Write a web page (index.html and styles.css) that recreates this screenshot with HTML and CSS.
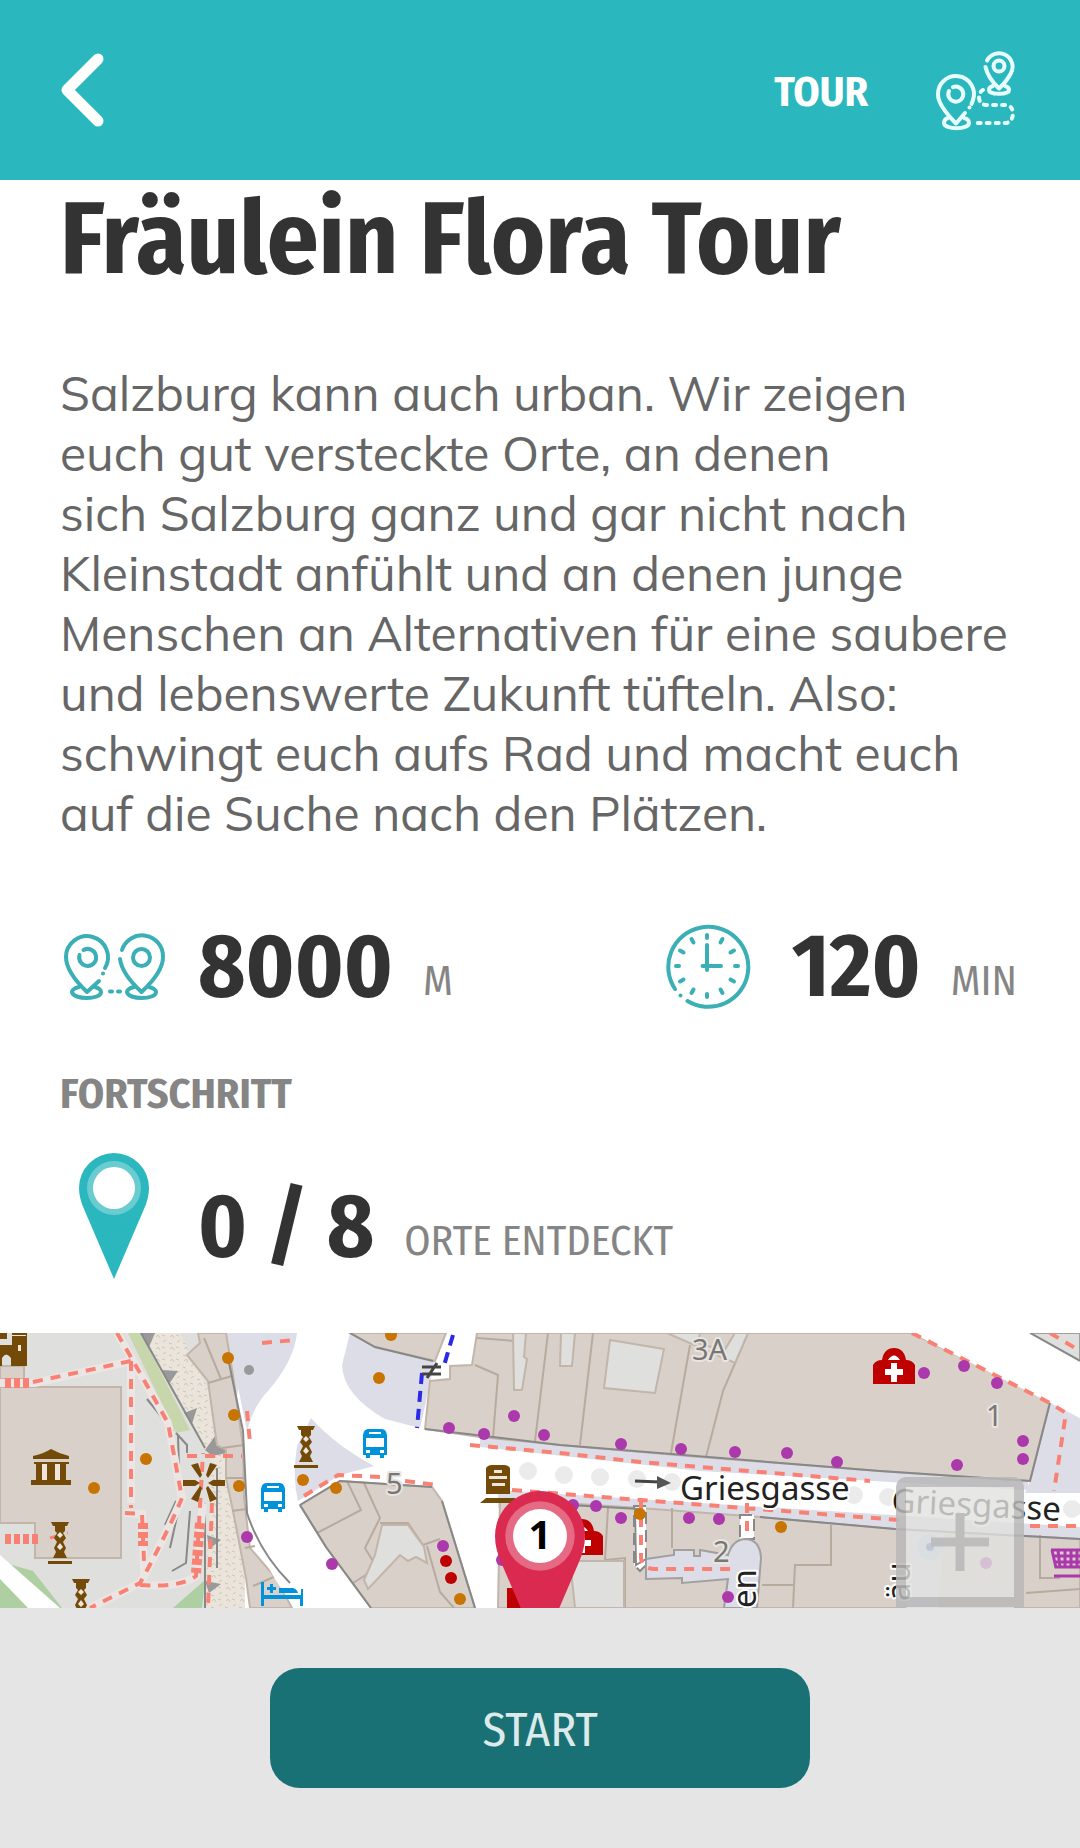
FILE: index.html
```html
<!DOCTYPE html>
<html lang="de">
<head>
    <meta charset="UTF-8">
    <meta name="viewport" content="width=device-width, initial-scale=1.0">
    <title>Fräulein Flora Tour</title>
    <link rel="stylesheet" href="styles.css">
</head>
<body>
    <header class="topbar">
        <button type="button" class="back" aria-label="Zurück">
            <svg width="44" height="74" viewBox="0 0 44 74"><path d="M38 6 L7 37 L38 68"/></svg>
        </button>
        <span class="topbar-label">TOUR</span>
        <svg class="line-icon route-icon" width="90" height="90" viewBox="0 0 90 90">
            <path d="M57 15.500 A13.500 13.500 0 1 1 81 28 Q77 36 69 43.500 Q58 33 55.500 22"/>
            <circle cx="69" cy="21" r="5.500"/>
            <path d="M63 41 Q59 42 59 45 C59 50 79 50 79 45 Q79 42 75 41"/>
            <path d="M35 68 L26 78.500 Q8 60 8 50 A18 18 0 1 1 43 55 L41.500 59"/>
            <path d="M39.500 62.500 v.1"/>
            <path d="M19 46 a7.500 7.500 0 1 0 4 -3.800"/>
            <path d="M18 73 Q14 74 14 78 C14 85 39 85 39 78 Q39 74 34 73"/>
            <path class="dashed" d="M53 45 Q49 47 49 53 Q50 60 57 60 H76 Q83 61 83 69 Q82 78 75 78 H42"/>
        </svg>
    </header>

    <main class="content">
        <h1>Fräulein Flora Tour</h1>
        <p class="description">Salzburg kann auch urban. Wir zeigen euch gut versteckte Orte, an denen sich&nbsp;Salzburg ganz und gar nicht nach Kleinstadt anfühlt und an denen junge Menschen an Alternativen für eine saubere und lebenswerte Zukunft tüfteln. Also: schwingt euch aufs Rad und macht euch auf die Suche nach den Plätzen.</p>

        <div class="stats">
            <div class="stat">
                <svg class="line-icon" width="108" height="72" viewBox="0 0 108 72">
                    <path d="M39 51 L27 62 Q6 42 6 27 A21 21 0 1 1 45 38"/>
                    <path d="M43 43.500 v.1"/>
                    <path d="M19.500 25 a8.500 8.500 0 1 0 4 -5"/>
                    <path d="M19 57 Q12 59 12 62 C13 70 41 70 41 62 Q41 59 35 57"/>
                    <path d="M50 61.500 h2 M58 61.500 h2"/>
                    <path d="M62 20 A21 21 0 0 1 103 27 Q103 42 81.500 62 Q62 44 60 29"/>
                    <circle cx="81.500" cy="27.500" r="8.500"/>
                    <path d="M74 57 Q67 59 67 62 C68 70 96 70 96 62 Q96 59 89 57"/>
                </svg>
                <span class="value">8000</span>
                <span class="unit">M</span>
            </div>
            <div class="stat">
                <svg class="line-icon" width="98" height="86" viewBox="0 0 98 86">
                    <path d="M11 66 A40 40 0 1 1 23.500 78"/>
                    <path d="M16.500 72.500 v.1"/>
                    <path d="M43 22 V47 M38.500 43 H57"/>
                    <path d="M43 12 v3 M43 71 v3 M12 43 h3 M71 43 h3 M27.500 16 l2 3.500 M58.500 16 l-2 3.500 M16 27.500 l3.500 2 M70 27.500 l-3.500 2 M16 58.500 l3.500 -2 M70 58.500 l-3.500 -2 M27.500 70 l2 -3.500 M58.500 70 l-2 -3.500"/>
                </svg>
                <span class="value">120</span>
                <span class="unit">MIN</span>
            </div>
        </div>

        <h2>FORTSCHRITT</h2>
        <div class="progress">
            <svg class="pin" width="70" height="126" viewBox="0 0 70 126">
                <path d="M35 126 L5 56 Q0 45 0 35 A35 35 0 0 1 70 35 Q70 45 65 56 Z"/>
                <circle class="pin-ring" cx="35" cy="35" r="27"/>
                <circle class="pin-hole" cx="35" cy="35" r="21"/>
            </svg>
            <span class="value">0 / 8</span>
            <span class="unit">ORTE ENTDECKT</span>
        </div>
    </main>

    <section class="map" aria-label="Karte">
        <svg class="map-canvas" viewBox="0 0 1080 275" preserveAspectRatio="xMidYMid slice">
            <defs>
                <pattern id="scree" width="14" height="12" patternUnits="userSpaceOnUse">
                    <rect width="14" height="12" fill="#eae4da"/>
                    <path d="M2 4 l2 -2 l2 3 M9 9 l3 -2 M8 2 l3 1 M1 10 l3 1" fill="none" stroke="#cbc7bf"/>
                </pattern>
                <g id="column" class="brown">
                    <path d="M-9 0 H9 L7 4 H5 V9 L3 11 L6 16 L3 20 L6 26 L4 30 L7 36 H-7 L-4 30 L-6 26 L-3 20 L-6 16 L-3 11 L-5 9 V4 H-7 Z"/>
                    <path class="light" d="M0 10 l3 3 l-3 3 l-3 -3 Z M0 21 l3 4 l-3 3 l-3 -3 Z"/>
                    <rect x="-12" y="39" width="24" height="3"/>
                </g>
                <g id="bus">
                    <path d="M-12 6 Q-11 0 -7 0 H7 Q11 0 12 6 V26 H9 V29 H5 V26 H-5 V29 H-9 V26 H-12 Z"/>
                    <path class="hole" d="M-6 3 H6 V5 H-6 Z M-9 9 H9 V18 H-9 Z M-9 21 h4 v3 h-4 Z M5 21 h4 v3 h-4 Z"/>
                </g>
                <g id="firstaid">
                    <path d="M-21 36 V17 Q-18 12 -12 12 Q-10 0 0 0 Q10 0 12 12 Q18 12 21 17 V36 Z"/>
                    <path class="hole" d="M-6 12 Q0 3 6 12 Z M-3 15 H3 V21 H9 V27 H3 V34 H-3 V27 H-9 V21 H-3 Z"/>
                </g>
            </defs>

            <!-- ground and streets -->
            <rect width="1080" height="275" fill="#dfdfde"/>
            <path class="street" d="M250 0 H1080 V275 H225 V120 Z"/>
            <path class="green-light" d="M128 0 H141 L190 97 L176 100 Z"/>
            <path class="green" d="M5 230 L33 238 L62 275 H0 V240 Z M173 275 L205 247 L202 275 Z"/>
            <path class="street" d="M0 222 L60 275 H28 L0 246 Z"/>
            <path fill="url(#scree)" d="M143 0 H180 L210 60 L225 117 L245 130 V275 H205 L212 130 L195 95 L164 40 Z"/>
            <path class="shadow" d="M141 0 h14 l-6 14 Z M162 37 l16 1 l-9 13 Z M184 80 l13 -5 l-5 16 Z M205 117 l10 -14 l12 17 l-15 3 Z M207 202 l14 5 l-12 9 Z M205 248 l16 3 l-12 9 Z"/>

            <!-- plazas -->
            <path class="plaza" d="M227 0 H297 Q294 28 268 58 Q254 72 247 98 Z"/>
            <path class="plaza" d="M350 0 L375 14 L435 28 L420 95 L385 86 Q343 62 342 32 Z"/>
            <path class="plaza" d="M1050 68 L1080 85 V160 H1025 L1030 148 Z"/>
            <path class="plaza" d="M480 103 L700 123 L1028 146 V157 L700 138 L480 114 Z"/>
            <path class="plaza" d="M498 157 L1080 194 V212 L498 175 Z"/>

            <!-- buildings -->
            <path class="building" d="M0 54 H121 V225 H35 V190 H0 Z M0 33 h24 v13 h-24 Z"/>
            <path class="building" d="M187 22 L200 10 L198 0 H226 L233 42 L243 114 L244 165 L250 215 L276 245 L292 275 H250 L246 245 L233 178 L226 145 V117 L217 112 L208 48 Z"/>
            <path class="building-line" d="M208 50 L232 43 M204 5 L221 46 M222 115 L244 112 M226 145 H244 M232 178 L246 176 M245 215 L255 213 M253 253 L276 243"/>
            <path class="street" d="M248 95 L246 130 C246 190 262 235 296 275 H378 L326 214 L300 172 Q292 140 297 113 L270 60 Z"/>
            <path class="plaza" d="M311 85 Q335 112 374 133 L340 142 L298 168 Q292 145 297 113 Z"/>
            <path class="building" d="M350 0 H446 L435 28 L375 14 Z"/>
            <path class="building" d="M425 96 L430 48 L450 46 V33 L472 32 L477 0 H912 L1050 68 L1030 148 L880 138 L700 124 L560 112 L480 104 Z"/>
            <path class="building" d="M300 172 L340 148 L432 154 L442 168 L475 275 H371 L326 214 Z"/>
            <path class="building" d="M500 166 L640 175 L760 184 L895 196 L1080 206 V275 H498 Z"/>
            <path class="building-line" d="M475 32 L498 42 L493 105 M477 5 L515 8 M548 0 L535 108 M593 0 L580 112 M690 12 L671 120 M748 0 L723 58 L706 124 M347 148 L361 177 L317 200 M364 150 L380 185 L365 215 L377 235 L353 250 M380 190 H408 L423 212 L440 206 M427 213 L440 259 L454 275 M608 175 L605 227 L625 225 V275 M672 175 V215 M831 192 V232 H795 L793 275 M762 252 H793 M1040 202 V245 H1060 M1026 260 L1080 256"/>
            <path class="court" d="M610 7 L664 16 L655 60 L604 55 Z M561 0 h14 l-3 33 h-12 Z M513 0 h13 l-2 24 l3 2 l-5 31 h-8 Z M375 222 L382 192 H408 L424 214 L427 230 L416 224 L408 228 L400 222 L368 256 L364 247 Z M570 228 H624 V275 H575 Z"/>
            <path class="court" d="M667 0 H748 L735 30 Z"/>
            <path class="building" d="M700 0 H735 L724 18 L698 10 Z"/>
            <path class="court outline" d="M1030 0 L1080 28 V0 Z"/>
            <path class="street" d="M912 0 H1030 L1080 28 V85 Z"/>
            <path class="street side" d="M634 173 H646 V232 H646 L640 238 L634 232 Z M740 182 H754 V206 H740 Z"/>
            <path class="plaza outline" d="M646 226 L674 222 V217 H694 V223 H700 V217 L728 222 Q733 206 746 206 Q760 207 761 225 L757 275 H724 L728 246 L682 250 V245 L646 246 Z"/>
            <path class="plaza" d="M906 196 L944 199 L938 275 H908 Z"/>
            <path class="wall" d="M141 0 L205 115 M227 20 L243 98 L247 180 Q260 220 290 250 M147 66 L173 98 M176 100 L187 112 V120 M178 102 L180 170 L170 215 M176 168 L165 192 M190 178 L186 230 L172 238 M205 170 V275 M217 135 V235 M350 0 L375 14 L433 28 M425 96 L560 112 L880 138 L1030 148 L1050 70 M300 172 L340 148 L432 154 M300 172 L326 214 L371 275 M442 168 L475 275 M498 168 L640 176 M646 226 L636 232 L635 176 M760 184 L895 196 L1080 206 M1030 0 L1080 28"/>

            <!-- footpaths -->
            <path class="path-casing" d="M0 50 L35 50 L131 28 V170 M117 0 L140 40 L168 90 L182 165 Q165 205 140 250 L90 275 M125 180 L142 181 L144 240 M140 252 Q180 255 196 243 L203 170"/>
            <path class="path" d="M33 49 L131 28 M131 28 V175 M117 0 L140 40 L168 90 L182 165 Q165 205 140 250 L90 275 M125 180 L142 181 L144 228 M140 252 Q180 255 196 243 L203 120 M187 123 H242 M247 78 L250 110 M262 10 L295 7 M304 163 L338 142 L382 144 M405 148 L438 152 M212 170 L208 275"/>
            <path class="path wide" d="M5 50 H30 M5 206 H38 M143 190 V213 M200 190 L196 240"/>
            <path class="path thin" d="M50 205 L68 200"/>
            <path class="path" d="M470 112 L560 120 L640 129 L870 148 M512 157 L640 167 L900 187 M1030 193 H1080 M641 166 V225 Q642 236 655 236 H730 M747 170 V206 M912 0 L1050 70 L1066 80 L1054 158 M1050 0 L1080 18"/>
            <path class="rail" d="M453 2 L443 36 M422 40 L417 95"/>
            <path class="gate" d="M422 34 H441 M422 41 H441 M427 45 L437 30"/>
            <g class="tree">
                <circle cx="528" cy="138" r="9"/><circle cx="564" cy="142" r="9"/><circle cx="600" cy="144" r="9"/>
                <circle cx="637" cy="146" r="9"/><circle cx="672" cy="149" r="9"/><circle cx="854" cy="162" r="9"/>
                <circle cx="888" cy="164" r="9"/><circle cx="1072" cy="176" r="9"/>
            </g>
            <path class="gate" d="M635 148 L660 149"/>
            <path class="arrow" d="M657 143 L671 150 L657 156 Z"/>

            <!-- points of interest -->
            <g class="dot-orange">
                <circle cx="228" cy="25" r="6"/><circle cx="234" cy="82" r="6"/><circle cx="146" cy="126" r="6"/>
                <circle cx="94" cy="155" r="6"/><circle cx="239" cy="153" r="6"/><circle cx="303" cy="147" r="6"/>
                <circle cx="336" cy="155" r="6"/><circle cx="379" cy="45" r="6"/><circle cx="391" cy="2" r="6"/>
                <circle cx="460" cy="266" r="6"/><circle cx="640" cy="181" r="6"/><circle cx="781" cy="194" r="6"/>
            </g>
            <g class="dot-purple">
                <circle cx="247" cy="204" r="6"/><circle cx="332" cy="231" r="6"/><circle cx="449" cy="95" r="6"/>
                <circle cx="484" cy="101" r="6"/><circle cx="514" cy="83" r="6"/><circle cx="544" cy="102" r="6"/>
                <circle cx="621" cy="111" r="6"/><circle cx="681" cy="116" r="6"/><circle cx="735" cy="119" r="6"/>
                <circle cx="787" cy="120" r="6"/><circle cx="837" cy="129" r="6"/><circle cx="957" cy="132" r="6"/>
                <circle cx="924" cy="40" r="6"/><circle cx="964" cy="33" r="6"/><circle cx="997" cy="50" r="6"/>
                <circle cx="1023" cy="108" r="6"/><circle cx="1023" cy="126" r="6"/><circle cx="443" cy="213" r="6"/>
                <circle cx="573" cy="172" r="6"/><circle cx="596" cy="173" r="6"/><circle cx="621" cy="185" r="6"/>
                <circle cx="689" cy="185" r="6"/><circle cx="719" cy="186" r="6"/><circle cx="728" cy="264" r="6"/>
                <circle cx="986" cy="230" r="6"/><circle cx="502" cy="227" r="6"/>
            </g>
            <g class="dot-red"><circle cx="446" cy="228" r="6"/><circle cx="451" cy="245" r="6"/></g>
            <circle class="shadow" cx="249" cy="37" r="5"/>
            <circle cx="930" cy="214" r="13" fill="#b8d8e8"/><circle cx="930" cy="214" r="4" fill="#5858c0"/>

            <path class="brown" d="M0 12 H12 V0 H27 V33 H11 V25 Q6 18 2 25 V33 H0 Z M0 0 H7 V6 H0 Z"/>
            <path class="light" d="M12 2 H26 V3 H12 Z M18 12 h3 v6 h-3 Z"/>
            <path class="brown" d="M33 123 Q43 121 51 116 Q60 121 69 123 V126 H33 Z M34 129 H69 V131 H66 V147 H71 V152 H31 V147 H36 V131 H34 Z"/>
            <path class="light" d="M42 131 h5 v16 h-5 Z M55 131 h5 v16 h-5 Z"/>
            <use href="#column" x="60" y="189"/>
            <use href="#column" x="81" y="246"/>
            <use href="#column" x="306" y="93"/>
            <path class="brown" d="M183 147 h12 l5 3 l-5 3 h-12 Z M225 147 h-12 l-5 3 l5 3 h12 Z M191 132 l7 -2 l4 12 l-2 3 Z M217 132 l-7 -2 l-4 12 l2 3 Z M191 166 l7 3 l4 -14 l-2 -2 Z M217 166 l-7 3 l-4 -14 l2 -2 Z"/>
            <path class="brown" d="M486 135 Q488 132 492 132 H504 Q508 132 510 135 V161 H486 Z M480 170 L486 165 H515 V170 Z"/>
            <path class="light" d="M494 137 h8 v3 h-8 Z M489 143 h18 v3 h-18 Z M492 150 h13 v3 h-13 Z"/>
            <g class="blue">
                <use href="#bus" x="273" y="150"/>
                <use href="#bus" x="375" y="96"/>
                <path d="M261 249 h3 v13 h37 v-6 h2 v17 h-3 v-7 h-36 v7 h-3 Z M270 251 h3 v3 h3 v3 h-3 v3 h-3 v-3 h-3 v-3 h3 Z M279 255 h14 q4 1 5 5 h-19 Z"/>
            </g>
            <g class="red">
                <use href="#firstaid" x="894" y="15"/>
                <use href="#firstaid" x="582" y="186"/>
                <rect x="507" y="255" width="14" height="20"/>
            </g>
            <path class="cart" d="M1051 217 H1080 M1053 223 H1080 M1054 229 H1080 M1055 234 H1080 M1054 243 H1080 M1052 217 L1056 235 M1058 217 L1060 235 M1065 217 V235 M1071 217 V235 M1077 217 V235"/>

            <text class="number" x="692" y="27">3A</text>
            <text class="number" x="986" y="93">1</text>
            <text class="number" x="386" y="161">5</text>
            <text class="number" x="713" y="229">2</text>
            <text class="street-name" x="680" y="167">Griesgasse</text>
            <text class="street-name" x="891" y="179" transform="rotate(3 891 179)">Griesgasse</text>
            <text class="street-name" transform="translate(756 275) rotate(-90)">en</text>
            <text class="street-name" transform="translate(910 268) rotate(-90)">äu</text>
        </svg>

        <div class="marker">
            <svg class="pin" width="90" height="162" viewBox="0 0 70 126">
                <path d="M35 126 L5 56 Q0 45 0 35 A35 35 0 0 1 70 35 Q70 45 65 56 Z"/>
                <circle class="pin-ring" cx="35" cy="35" r="27"/>
                <circle class="pin-hole" cx="35" cy="35" r="21"/>
            </svg>
            <span class="marker-number">1</span>
        </div>

        <div class="zoom">
            <button type="button" aria-label="Vergrößern"><svg width="58" height="58" viewBox="0 0 58 58"><path d="M29 0 V58 M0 29 H58"/></svg></button>
            <button type="button" aria-label="Verkleinern"><svg width="58" height="58" viewBox="0 0 58 58"><path d="M0 29 H58"/></svg></button>
        </div>
    </section>

    <footer class="actions">
        <button type="button" class="start">START</button>
    </footer>
</body>
</html>
```
FILE: styles.css
```css
* {
    margin: 0;
    padding: 0;
    box-sizing: border-box;
}

body {
    display: flex;
    flex-direction: column;
    min-height: 100vh;
    background-color: #fff;
    color: #333;
    font-family: "Fira Sans Condensed", "Roboto Condensed", sans-serif;
}

button {
    border: none;
    background: none;
    font: inherit;
    cursor: pointer;
}

.topbar {
    display: flex;
    align-items: center;
    height: 180px;
    padding: 0 60px;
    background-color: #2ab7be;
    color: #fff;
}

.back {
    margin-right: auto;
}

.back svg {
    display: block;
    fill: none;
    stroke: #fff;
    stroke-width: 11;
    stroke-linecap: round;
    stroke-linejoin: round;
}

.topbar-label {
    padding-top: 4px;
    font-size: 42px;
    font-weight: bold;
}

.line-icon {
    flex: none;
    fill: none;
    stroke: #3aafb5;
    stroke-width: 4;
    stroke-linecap: round;
    stroke-linejoin: round;
}

.route-icon {
    margin-left: 62px;
    stroke: #e8ffff;
    stroke-width: 4;
}

.dashed {
    stroke-dasharray: 3 6;
}

.content {
    padding: 0 60px;
}

h1 {
    font-size: 102px;
    line-height: 118px;
}

.description {
    margin-top: 65px;
    color: #666;
    font-family: Muli, Mulish, Lato, sans-serif;
    font-size: 48px;
    line-height: 60px;
}

.stats {
    display: flex;
    justify-content: space-between;
    margin-top: 63px;
    padding-right: 3px;
}

.stat {
    display: flex;
    align-items: center;
    height: 120px;
}

.value {
    margin-left: 30px;
    font-size: 90px;
    font-weight: bold;
    line-height: 120px;
}

.unit {
    align-self: flex-end;
    margin-left: 30px;
    color: #858585;
    font-size: 42px;
    line-height: 90px;
}

h2 {
    margin-top: 43px;
    color: #858585;
    font-size: 42px;
    line-height: 50px;
}

.progress {
    display: flex;
    align-items: flex-end;
    height: 133px;
    margin: 34px 0 47px;
}

.pin {
    flex: none;
    align-self: flex-start;
    margin: 0 19px;
    fill: #2ab7be;
}

.pin-ring {
    fill: #fff;
    opacity: 0.3;
}

.pin-hole {
    fill: #fff;
}

.map {
    position: relative;
    display: flex;
    flex: 1 0 0;
    min-height: 200px;
    overflow: hidden;
}

.map-canvas {
    flex: 1;
    width: 100%;
    height: 100%;
}

.street { fill: #fff; }
.plaza { fill: #dddde8; }
.green { fill: #aecfa1; }
.green-light { fill: #c8d7ab; }
.shadow { fill: #999; }
.building { fill: #d9d0c9; stroke: #c2b5aa; stroke-width: 2; }
.building-line { fill: none; stroke: #b9aa9e; stroke-width: 2; }
.court { fill: #dfdfde; stroke: #c2b5aa; stroke-width: 2; }
.outline { stroke: #a0a0a0; stroke-width: 2; }
.side { stroke: #888; stroke-width: 2; stroke-dasharray: 12 6; }
.wall { fill: none; stroke: #888; stroke-width: 2; }
.path-casing { fill: none; stroke: #ebe6e4; stroke-width: 8; }
.path { fill: none; stroke: #f98174; stroke-width: 4; stroke-dasharray: 10 8; }
.path.wide { stroke-width: 10; stroke-dasharray: 6 3; }
.path.thin { stroke-width: 3; }
.rail { fill: none; stroke: #2a2ae8; stroke-width: 4; stroke-dasharray: 11 7; }
.gate { fill: none; stroke: #444; stroke-width: 3; }
.arrow { fill: #555; }
.tree { fill: #ebebeb; }
.brown { fill: #734a08; }
.light { fill: #eee6dc; }
.hole { fill: #fff; }
.blue { fill: #0092da; }
.red,
.dot-red { fill: #bf0000; }
.dot-orange { fill: #c77400; }
.dot-purple { fill: #ac39ac; }
.cart { fill: none; stroke: #ac39ac; stroke-width: 3; }

.number,
.street-name {
    font-family: "Noto Sans", sans-serif;
    paint-order: stroke;
    stroke: #fff;
    stroke-width: 4px;
    stroke-linejoin: round;
}

.number {
    font-size: 29px;
    fill: #777;
    stroke: #e8e4e0;
}

.street-name {
    font-size: 33px;
    fill: #222;
}

.marker {
    position: absolute;
    top: 158px;
    left: 50%;
    width: 90px;
    margin-left: -45px;
}

.marker .pin {
    display: block;
    margin: 0;
    fill: #da2a50;
}

.marker-number {
    position: absolute;
    top: 0;
    left: 0;
    width: 100%;
    color: #000;
    font-family: "Noto Sans", sans-serif;
    font-size: 40px;
    font-weight: bold;
    line-height: 86px;
    text-align: center;
}

.zoom {
    position: absolute;
    top: 144px;
    right: 56px;
    border: 10px solid rgba(185, 185, 185, 0.85);
    border-radius: 10px;
}

.zoom button {
    display: flex;
    align-items: center;
    justify-content: center;
    width: 108px;
    height: 110px;
    background-color: rgba(225, 225, 223, 0.8);
}

.zoom button + button {
    border-top: 10px solid rgba(185, 185, 185, 0.85);
    background-clip: padding-box;
}

.zoom svg {
    stroke: #bdbdbd;
    stroke-width: 9;
}

.actions {
    display: flex;
    justify-content: center;
    padding: 60px 0;
    background-color: #e5e5e5;
}

.start {
    width: 50%;
    height: 120px;
    padding-top: 4px;
    border-radius: 30px;
    background-color: #1a7175;
    color: #dceaea;
    font-size: 48px;
}
```
